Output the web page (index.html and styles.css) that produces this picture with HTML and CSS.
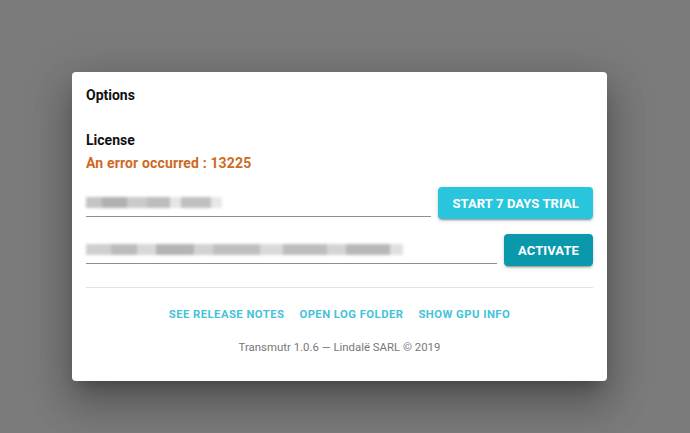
FILE: index.html
```html
<!DOCTYPE html>
<html lang="en">
<head>
    <meta charset="UTF-8">
    <meta name="viewport" content="width=device-width, initial-scale=1.0">
    <title>Options</title>
    <link rel="stylesheet" href="styles.css">
</head>
<body>
    <div class="dialog">
        <h1 class="title">Options</h1>

        <h2 class="section">License</h2>
        <p class="error">An error occurred : 13225</p>

        <div class="row">
            <div class="field">
                <div class="blur blur-short"></div>
            </div>
            <button class="btn btn-light">Start 7 days trial</button>
        </div>

        <div class="row row-second">
            <div class="field">
                <div class="blur blur-long"></div>
            </div>
            <button class="btn btn-dark">Activate</button>
        </div>

        <hr class="divider">

        <div class="links">
            <a class="link">See release notes</a>
            <a class="link">Open log folder</a>
            <a class="link">Show GPU info</a>
        </div>

        <p class="footer">Transmutr 1.0.6 — Lindalë SARL © 2019</p>
    </div>
</body>
</html>
```

FILE: styles.css
```css
body {
    margin: 0;
    height: 433px;
    background-color: #7b7b7b;
    font-family: Roboto, "Liberation Sans", sans-serif;
    overflow: hidden;
}
.dialog {
    width: 535px;
    box-sizing: border-box;
    margin: 72px 0 0 72px;
    padding: 12px 14px 26px;
    background-color: #fff;
    border-radius: 4px;
    box-shadow: 0 11px 15px -7px rgba(0,0,0,.25),
                0 24px 38px 3px rgba(0,0,0,.18),
                0 9px 46px 8px rgba(0,0,0,.14);
}
.title {
    margin: 0;
    font-size: 14px;
    font-weight: 700;
    line-height: 22px;
    color: #111;
}
.section {
    margin: 23px 0 0;
    font-size: 14px;
    font-weight: 700;
    line-height: 22px;
    color: #111;
}
.error {
    margin: 1px 0 0;
    font-size: 14px;
    font-weight: 700;
    line-height: 22px;
    letter-spacing: 0.15px;
    color: #d0691f;
}
.row {
    display: flex;
    align-items: flex-end;
    gap: 7px;
    margin-top: 13px;
}
.row-second {
    margin-top: 15px;
}
.field {
    flex: 1;
    height: 28px;
    margin-bottom: 2px;
    border-bottom: 1px solid #8e8e8e;
    display: flex;
    align-items: center;
}
.blur {
    height: 11px;
    filter: blur(1.5px);
}
.blur-short {
    width: 136px;
    background: linear-gradient(90deg, #c4c4c4 0 12%, #b0b0b0 12% 30%, #cacaca 30% 45%, #bdbdbd 45% 62%, #e6e6e6 62% 70%, #c0c0c0 70% 92%, #e8e8e8 92%);
}
.blur-long {
    width: 317px;
    background: linear-gradient(90deg, #cfcfcf 0 8%, #bcbcbc 8% 16%, #d8d8d8 16% 22%, #b4b4b4 22% 34%, #d2d2d2 34% 40%, #bfbfbf 40% 55%, #dadada 55% 62%, #bdbdbd 62% 76%, #d4d4d4 76% 82%, #b8b8b8 82% 96%, #e0e0e0 96%);
}
.btn {
    height: 32px;
    padding: 0 14px;
    border: none;
    border-radius: 4px;
    color: #fff;
    font-family: Roboto, "Liberation Sans", sans-serif;
    font-size: 13px;
    font-weight: 700;
    text-transform: uppercase;
    letter-spacing: 0.1px;
    cursor: pointer;
    box-shadow: 0 3px 1px -2px rgba(0,0,0,.2), 0 2px 2px 0 rgba(0,0,0,.14), 0 1px 5px 0 rgba(0,0,0,.12);
}
.btn-light {
    background-color: #29c5dc;
}
.btn-dark {
    background-color: #0a98ad;
}
.divider {
    margin: 21px 0 0;
    border: none;
    border-top: 1px solid #e2e2e2;
}
.links {
    display: flex;
    justify-content: center;
    gap: 15px;
    margin-top: 19px;
}
.link {
    font-size: 11.3px;
    font-weight: 700;
    line-height: 16px;
    letter-spacing: 0.45px;
    text-transform: uppercase;
    color: #45c3d8;
    cursor: pointer;
}
.footer {
    margin: 16px 0 0;
    text-align: center;
    font-size: 11.4px;
    line-height: 16px;
    color: #787878;
}
```
